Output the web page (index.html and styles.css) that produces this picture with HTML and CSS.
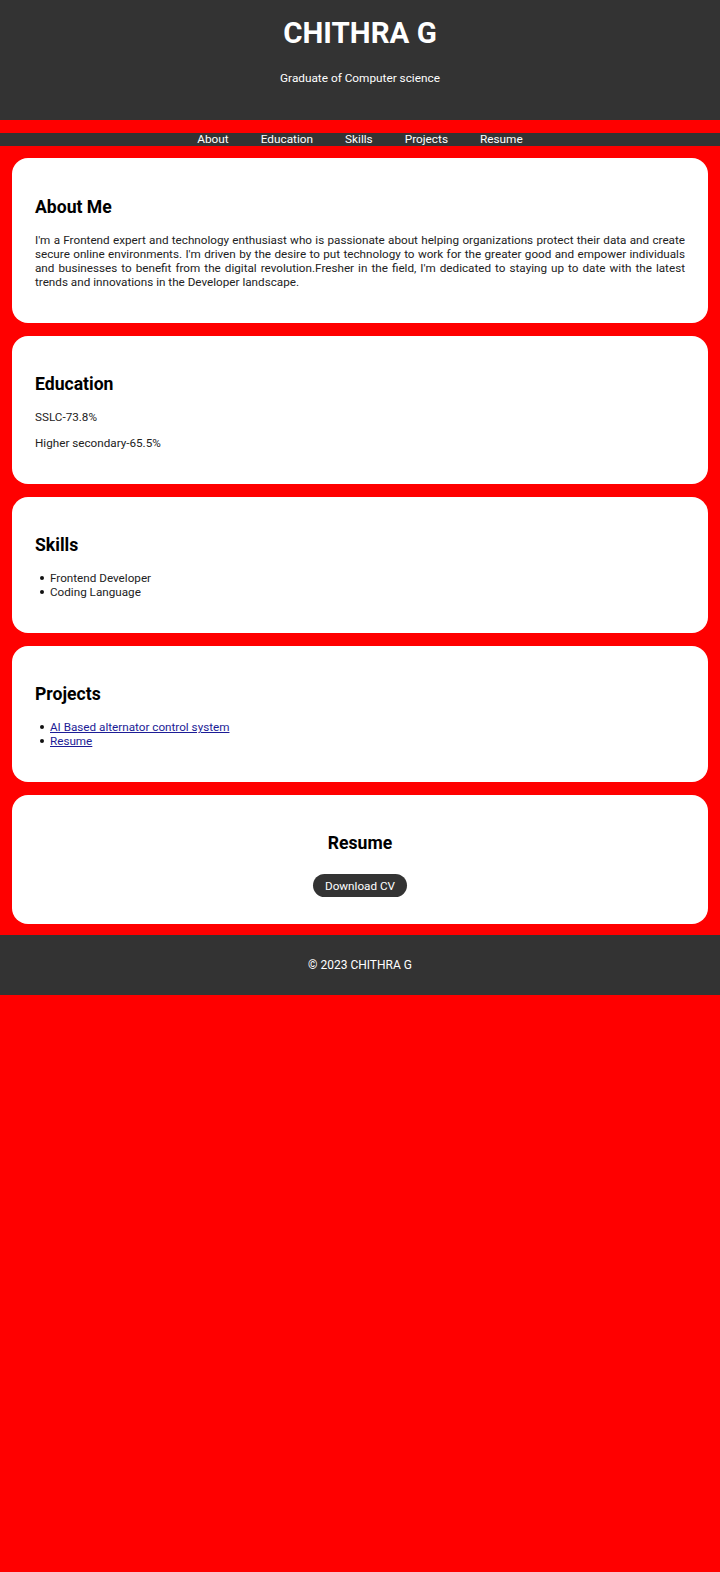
FILE: index.html
```html
<!DOCTYPE html>
<html lang="en">
<head>
<meta charset="utf-8">
<title>CHITHRA G</title>
<link rel="stylesheet" href="styles.css">
</head>
<body>
<header class="site-header">
  <h1 class="title">CHITHRA G</h1>
  <p class="subtitle">Graduate of Computer science</p>
</header>
<nav class="site-nav">
  <a href="#about">About</a>
  <a href="#education">Education</a>
  <a href="#skills">Skills</a>
  <a href="#projects">Projects</a>
  <a href="#resume">Resume</a>
</nav>
<main class="content">
  <section class="card" id="about">
    <h2>About Me</h2>
    <p class="justify">I'm a Frontend expert and technology enthusiast who is passionate about helping organizations protect their data and create secure online environments. I'm driven by the desire to put technology to work for the greater good and empower individuals and businesses to benefit from the digital revolution.Fresher in the field, I'm dedicated to staying up to date with the latest trends and innovations in the Developer landscape.</p>
  </section>
  <section class="card" id="education">
    <h2>Education</h2>
    <p>SSLC-73.8%</p>
    <p>Higher secondary-65.5%</p>
  </section>
  <section class="card" id="skills">
    <h2>Skills</h2>
    <ul class="list">
      <li>Frontend Developer</li>
      <li>Coding Language</li>
    </ul>
  </section>
  <section class="card" id="projects">
    <h2>Projects</h2>
    <ul class="list">
      <li><a class="link" href="#">AI Based alternator control system</a></li>
      <li><a class="link" href="#">Resume</a></li>
    </ul>
  </section>
  <section class="card center" id="resume">
    <h2>Resume</h2>
    <div class="btn-row"><a class="btn" href="#">Download CV</a></div>
  </section>
</main>
<footer class="site-footer">
  <p>&copy; 2023 CHITHRA G</p>
</footer>
</body>
</html>
```
FILE: styles.css
```css
html, body {
  margin: 0;
  padding: 0;
}
body {
  background: #ff0000;
  font-family: Roboto, "Liberation Sans", sans-serif;
  color: #222;
  font-size: 11.7px;
}
.site-header {
  background: #333;
  color: #fff;
  text-align: center;
  padding: 15px 0 34px;
}
.title {
  margin: 0;
  font-size: 29.5px;
  font-weight: 700;
  line-height: 37px;
}
.subtitle {
  margin: 19px 0 0;
  font-size: 11.8px;
  line-height: 15px;
}
.site-nav {
  margin-top: 12.5px;
  background: #333;
  display: flex;
  justify-content: center;
  gap: 32px;
  height: 13px;
  line-height: 13px;
}
.site-nav a {
  color: #fff;
  text-decoration: none;
  font-size: 11.8px;
}
.content {
  display: flex;
  flex-direction: column;
  gap: 12.5px;
  padding: 12.5px 12px 11px;
}
.card {
  background: #fff;
  border-radius: 16px;
  padding: 21px 23px 23px;
}
.card h2 {
  font-size: 17.6px;
  font-weight: 700;
  color: #000;
  margin: 16.6px 0 13.6px;
  line-height: 23.4px;
}
.card p {
  margin: 11.5px 0;
  line-height: 14px;
}
.justify {
  text-align: justify;
}
.list {
  margin: 11px 0;
  padding-left: 5px;
  line-height: 14px;
  list-style: none;
}
.list li::before {
  content: "";
  display: inline-block;
  width: 4px;
  height: 4px;
  border-radius: 50%;
  background: #111;
  margin-right: 6px;
  vertical-align: 2px;
}
.link {
  color: #1c1c96;
}
.center {
  text-align: center;
}
.btn-row {
  margin: 18.6px 0 4px;
}
.btn {
  display: inline-block;
  background: #333;
  color: #fff;
  text-decoration: none;
  font-size: 11.7px;
  line-height: 14px;
  padding: 4.5px 12px;
  border-radius: 12px;
}
.site-footer {
  background: #333;
  color: #fff;
  text-align: center;
  height: 60px;
  display: flex;
  align-items: center;
  justify-content: center;
}
.site-footer p {
  margin: 0;
  font-size: 12px;
}
```
